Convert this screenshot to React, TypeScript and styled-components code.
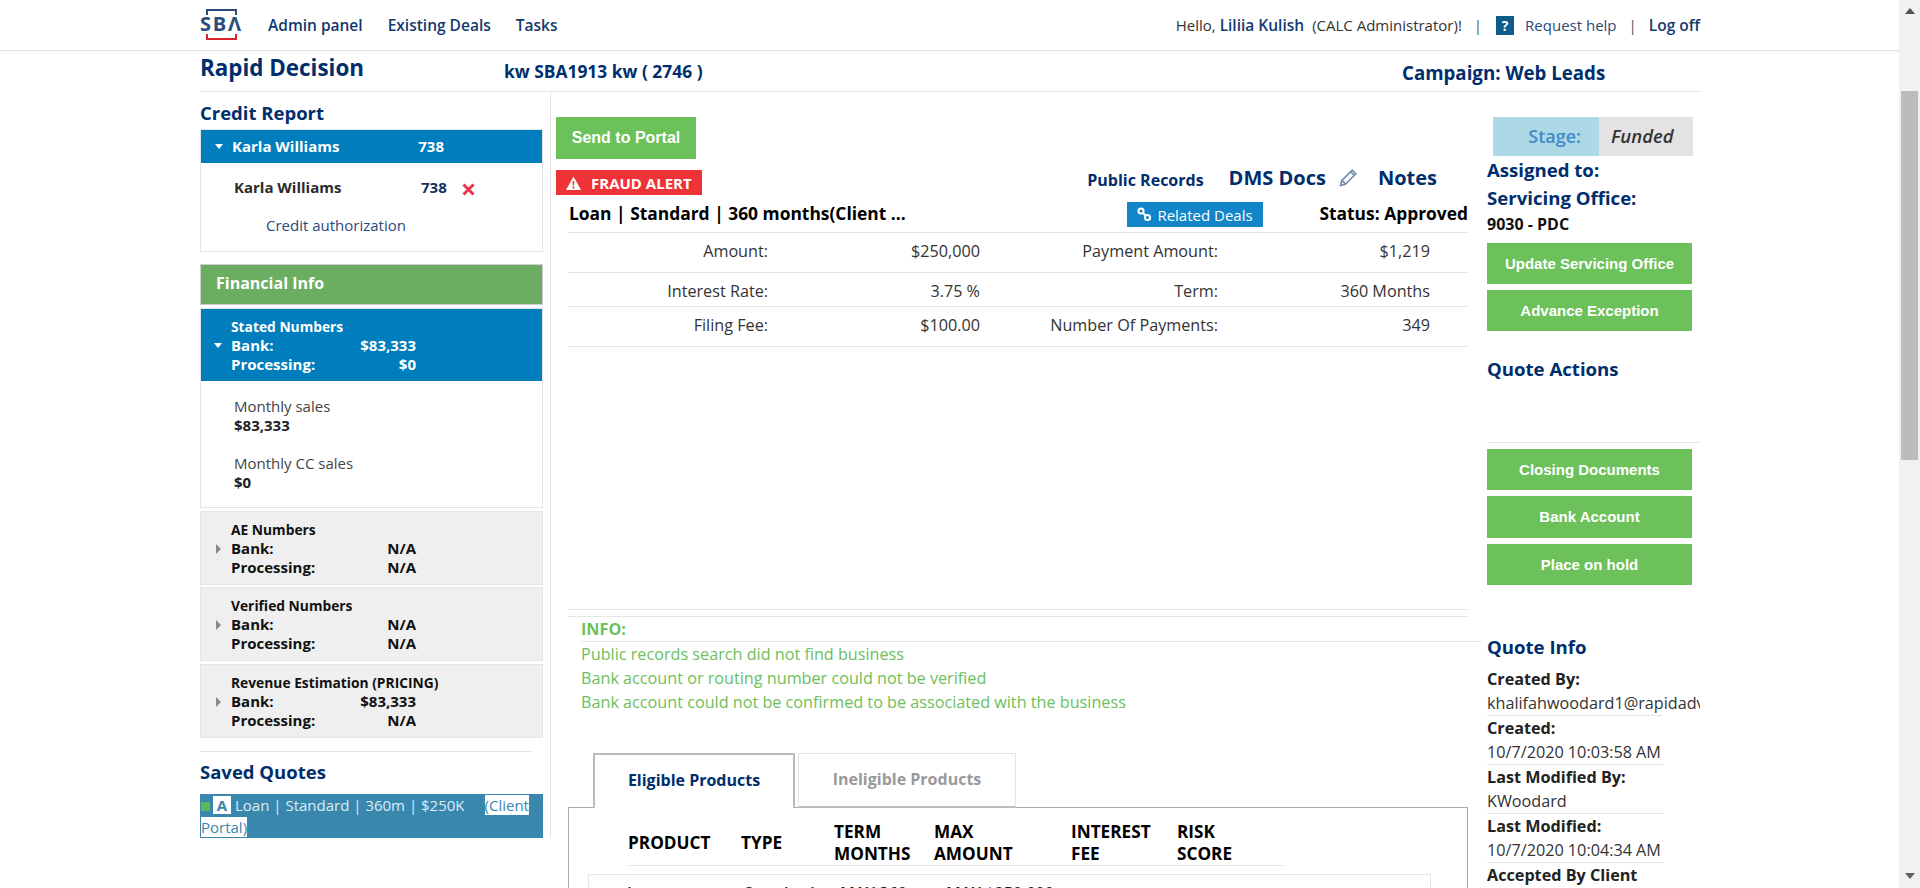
import React from "react";
import styled, { createGlobalStyle } from "styled-components";

const GlobalStyle = createGlobalStyle`
  html, body {
    margin: 0;
    height: 888px;
    overflow: hidden;
    background: #fff;
    font-family: "Open Sans", "Liberation Sans", sans-serif;
    font-size: 15px;
    color: #333;
  }
  * { box-sizing: border-box; }
`;

const NAVY = "#002e6d";
const GREEN = "#6cc15a";
const LINE = "#e5e5e5";

const Shell = styled.div`
  display: flex;
  height: 888px;
`;

const Page = styled.div`
  flex: 1;
  min-width: 0;
  overflow: hidden;
`;

const ScrollTrack = styled.div`
  width: 21px;
  height: 888px;
  background: #f1f1f1;
  display: flex;
  flex-direction: column;
  align-items: center;
`;

const ScrollUp = styled.div`
  margin-top: 8px;
  width: 0;
  height: 0;
  border-left: 5px solid transparent;
  border-right: 5px solid transparent;
  border-bottom: 6px solid #505050;
`;

const ScrollThumb = styled.div`
  margin-top: 77px;
  width: 17px;
  height: 369px;
  background: #bcbcbc;
`;

const ScrollDown = styled.div`
  margin-top: 413px;
  width: 0;
  height: 0;
  border-left: 5px solid transparent;
  border-right: 5px solid transparent;
  border-top: 6px solid #606060;
`;

const Header = styled.header`
  height: 51px;
  padding: 0 199px 0 200px;
  display: flex;
  align-items: center;
  border-bottom: 1px solid #e3e3e3;
  box-shadow: 0 1px 3px rgba(0, 0, 0, 0.04);
`;

const Logo = styled.svg`
  width: 42px;
  height: 34px;
  margin-right: 26px;
  flex: none;
`;

const Nav = styled.nav`
  display: flex;
  gap: 25px;
`;

const NavLink = styled.a`
  font-weight: 600;
  font-size: 15.5px;
  color: #123a6e;
`;

const UserArea = styled.div`
  margin-left: auto;
  display: flex;
  align-items: center;
  font-size: 15px;
  color: #333;
`;

const UserName = styled.b`
  font-weight: 600;
  font-size: 15.5px;
  color: #123a6e;
  margin: 0 8px 0 4px;
`;

const Pipe = styled.span`
  margin: 0 12px;
  color: #555;
`;

const HelpBox = styled.span`
  width: 18px;
  height: 19px;
  margin: 0 11px 0 2px;
  background: #0d5c8c;
  color: #fff;
  font-weight: 700;
  font-size: 14px;
  line-height: 19px;
  text-align: center;
`;

const HelpLink = styled.a`
  color: #2a4a7b;
`;

const LogOff = styled.a`
  font-weight: 600;
  font-size: 15.5px;
  color: #123a6e;
`;

const Wrap = styled.div`
  margin-left: 200px;
  width: 1500px;
`;

const TitleRow = styled.div`
  height: 41px;
  display: grid;
  grid-template-columns: 304px 898px 1fr;
  align-items: center;
  border-bottom: 1px solid ${LINE};
  color: ${NAVY};
`;

const PageTitle = styled.h1`
  margin: 0 0 6px;
  font-size: 22.4px;
  line-height: 32px;
  font-weight: 700;
`;

const DealName = styled.div`
  font-size: 17.4px;
  font-weight: 700;
  margin-bottom: 1px;
`;

const Campaign = styled.div`
  font-size: 18.7px;
  font-weight: 700;
  margin-top: 3px;
`;

const Columns = styled.div`
  display: flex;
  align-items: flex-start;
`;

const LeftCol = styled.aside`
  width: 351px;
  height: 746px;
  padding: 9px 7px 0 0;
  border-right: 1px solid ${LINE};
  flex: none;
`;

const SectionTitle = styled.h2`
  margin: 0;
  font-size: 18.5px;
  line-height: 28px;
  font-weight: 700;
  color: ${NAVY};
`;

const CreditHeading = styled(SectionTitle)`
  line-height: 24px;
  height: 28px;
`;

const Panel = styled.div<{ $mt?: number }>`
  border: 1px solid ${LINE};
  margin-top: ${(p) => p.$mt ?? 0}px;
`;

const CreditHead = styled.div`
  height: 33px;
  padding-bottom: 1px;
  background: #007dbc;
  color: #fff;
  font-weight: 700;
  font-size: 15px;
  display: grid;
  grid-template-columns: 31px 212px;
  align-items: center;
`;

const ValueRow = styled.div`
  display: flex;
  justify-content: space-between;
`;

const CaretDown = styled.span`
  justify-self: center;
  margin-left: 4px;
  width: 0;
  height: 0;
  border-left: 4.5px solid transparent;
  border-right: 4.5px solid transparent;
  border-top: 5px solid #fff;
`;

const CaretRight = styled.span`
  justify-self: center;
  margin-left: 4px;
  width: 0;
  height: 0;
  border-top: 5px solid transparent;
  border-bottom: 5px solid transparent;
  border-left: 5px solid #888;
`;

const CreditBody = styled.div`
  height: 88px;
  padding: 14px 0 0 33px;
`;

const BureauRow = styled.div`
  display: flex;
  align-items: center;
  font-weight: 700;
  line-height: 20px;
  color: #2b2b2b;
`;

const BureauName = styled.span`
  width: 187px;
`;

const BureauScore = styled.span`
  color: #14305c;
  width: 41px;
`;

const RemoveIcon = styled.svg`
  width: 13px;
  height: 13px;
  margin-top: 4px;
`;

const AuthLink = styled.a`
  display: block;
  margin: 18px 0 0 32px;
  line-height: 20px;
  color: #2a4a7b;
`;

const GreenBar = styled.div`
  margin-top: 12px;
  height: 41px;
  background: #6bae62;
  border: 1px solid #cfcfcf;
  padding-left: 15px;
  color: #fff;
  font-weight: 700;
  font-size: 16px;
  line-height: 37px;
`;

const AccordionHead = styled.div<{ $open?: boolean }>`
  background: ${(p) => (p.$open ? "#007dbc" : "#efefef")};
  color: ${(p) => (p.$open ? "#fff" : "#111")};
  padding: 8px 0 7px;
  display: grid;
  grid-template-columns: 30px 185px;
  grid-auto-rows: 19px;
  font-size: 15px;
  font-weight: 700;
  line-height: 19px;
  align-items: center;
`;

const HeadTitle = styled.div`
  grid-column: 2;
  font-size: 13.8px;
  white-space: nowrap;
`;

const HeadValues = styled(ValueRow)`
  grid-column: 2;
`;

const HeadSpacer = styled.span`
  grid-column: 1;
`;

const FieldList = styled.div`
  padding: 16px 0 15px 33px;
  line-height: 19px;
  font-size: 15px;
`;

const FieldLabel = styled.div`
  color: #444;
`;

const FieldValue = styled.div`
  font-weight: 700;
  color: #222;
  margin-bottom: 19px;
  &:last-child {
    margin-bottom: 0;
  }
`;

const ShortRule = styled.div`
  margin-top: 13px;
  width: 332px;
  border-top: 1px solid ${LINE};
`;

const SavedTitle = styled(SectionTitle)`
  margin-top: 6px;
`;

const QuoteRow = styled.div`
  margin-top: 8px;
  width: 343px;
  height: 44px;
  padding-left: 1px;
  background: #3a87ad;
  color: #d9edf7;
  line-height: 22px;
  font-size: 15px;
`;

const StatusDot = styled.span`
  display: inline-block;
  width: 9px;
  height: 9px;
  margin-right: 3px;
  background: #5cb85c;
`;

const GradeBadge = styled.span`
  display: inline-block;
  width: 18px;
  margin-right: 4px;
  line-height: 18px;
  text-align: center;
  background: #fff;
  color: #3a87ad;
  font-weight: 700;
`;

const PortalLink = styled.a`
  margin-left: 20px;
  background: #fff;
  color: #3a87ad;
`;

const CenterCol = styled.main`
  width: 930px;
  padding: 25px 0 0 5px;
  flex: none;
`;

const PortalButton = styled.button`
  display: block;
  width: 140px;
  height: 42px;
  border: 0;
  padding: 0;
  background: ${GREEN};
  color: #fff;
  font-family: "Liberation Sans", Arial, sans-serif;
  font-weight: 700;
  font-size: 16px;
`;

const AlertRow = styled.div`
  margin-top: 11px;
  width: 912px;
  height: 25px;
  display: flex;
  align-items: center;
`;

const FraudAlert = styled.div`
  width: 146px;
  height: 25px;
  padding-left: 10px;
  background: #ef3237;
  color: #fff;
  font-weight: 700;
  font-size: 15px;
  display: flex;
  align-items: center;
  gap: 10px;
`;

const DealLinks = styled.div`
  margin-left: auto;
  padding: 0 31px 11px 0;
  display: flex;
  align-items: center;
  color: ${NAVY};
  font-weight: 700;
`;

const PublicRecords = styled.a`
  font-size: 16px;
  margin: 5px 25px 0 0;
`;

const DocLink = styled.a`
  font-size: 20px;
`;

const PencilIcon = styled.svg`
  width: 19px;
  height: 19px;
  margin: 0 20px 0 13px;
`;

const DetailBlock = styled.div`
  margin: 7px 0 0 12px;
  width: 900px;
`;

const LoanHead = styled.div`
  height: 31px;
  display: grid;
  grid-template-columns: 559px 136px 1fr;
  align-items: start;
  border-bottom: 1px solid ${LINE};
`;

const LoanTitle = styled.div`
  padding-left: 1px;
  font-size: 17.4px;
  line-height: 22px;
  font-weight: 700;
  color: #000;
  white-space: nowrap;
`;

const RelatedButton = styled.a`
  height: 25px;
  background: #1185c8;
  color: #fff;
  font-size: 15px;
  display: flex;
  align-items: center;
  justify-content: center;
  gap: 5px;
`;

const LoanStatus = styled(LoanTitle)`
  text-align: right;
`;

const TermRow = styled.div<{ $h: number }>`
  height: ${(p) => p.$h}px;
  padding-top: 8px;
  display: grid;
  grid-template-columns: 200px 212px 238px 212px;
  font-size: 16.2px;
  line-height: 20px;
  text-align: right;
  color: #333;
  border-bottom: 1px solid ${LINE};
`;

const DoubleRule = styled.div`
  margin-top: 262px;
  height: 8px;
  border-top: 1px solid ${LINE};
  border-bottom: 1px solid ${LINE};
`;

const InfoBlock = styled.div`
  margin-left: 13px;
  width: 900px;
  color: #6cbf5c;
  line-height: 24px;
  font-size: 16.2px;
`;

const InfoTitle = styled.div`
  font-weight: 700;
  border-bottom: 1px solid ${LINE};
`;

const Tabs = styled.div`
  margin: 39px 0 0 25px;
  display: flex;
  gap: 3px;
  height: 55px;
`;

const Tab = styled.div<{ $active?: boolean; $w: number }>`
  position: relative;
  width: ${(p) => p.$w}px;
  height: 55px;
  font-weight: 700;
  font-size: 16px;
  line-height: 50px;
  text-align: center;
  color: ${(p) => (p.$active ? NAVY : "#999")};
  background: #fff;
  border: ${(p) => (p.$active ? "2px solid #bbb" : `1px solid ${LINE}`)};
  border-bottom: ${(p) => (p.$active ? "0" : "2px solid #bbb")};
`;

const ProductPanel = styled.section`
  margin-top: -1px;
  width: 900px;
  height: 200px;
  padding: 13px 0 0 59px;
  border: 1px solid #aaa;
  border-bottom: 0;
`;

const ProductHead = styled.div`
  width: 656px;
  height: 45px;
  display: grid;
  grid-template-columns: 113px 93px 100px 137px 106px 107px;
  align-items: center;
  font-size: 17.2px;
  line-height: 22px;
  font-weight: 700;
  color: #000;
  border-bottom: 1px solid ${LINE};
`;

const ProductRow = styled.div`
  margin: 8px 0 0 -40px;
  width: 843px;
  height: 60px;
  padding: 8px 0 0 38px;
  border: 1px solid ${LINE};
  display: grid;
  grid-template-columns: 117px 96px 106px 200px;
  font-size: 16px;
  font-weight: 600;
  line-height: 20px;
  color: #222;
`;

const RightCol = styled.aside`
  margin-left: 6px;
  width: 213px;
  padding-top: 25px;
  overflow: hidden;
  flex: none;
`;

const StageRow = styled.div`
  margin-left: 6px;
  display: flex;
  height: 39px;
  font-size: 18px;
  font-weight: 600;
  line-height: 38px;
`;

const StageLabel = styled.div`
  width: 106px;
  padding-right: 18px;
  text-align: right;
  background: #add8e6;
  color: #428bca;
`;

const StageValue = styled.div`
  width: 94px;
  padding-left: 12px;
  background: #e3e3e3;
  color: #333;
  font-size: 18.5px;
  font-style: italic;
`;

const SideHeading = styled.div<{ $mt?: number }>`
  margin-top: ${(p) => p.$mt ?? 0}px;
  font-size: 18.6px;
  font-weight: 700;
  line-height: 28px;
  color: ${NAVY};
`;

const OfficeCode = styled.div`
  font-size: 16px;
  font-weight: 700;
  line-height: 24px;
  color: #111;
`;

const ActionList = styled.div<{ $mt: number }>`
  margin-top: ${(p) => p.$mt}px;
  display: flex;
  flex-direction: column;
  gap: 6px;
`;

const ActionButton = styled.button<{ $tall?: boolean }>`
  width: 205px;
  height: ${(p) => (p.$tall ? 42 : 41)}px;
  border: 0;
  padding: 0 0 ${(p) => (p.$tall ? 1 : 0)}px;
  background: ${GREEN};
  color: #fff;
  font-family: "Liberation Sans", Arial, sans-serif;
  font-weight: 700;
  font-size: 15px;
`;

const SideRule = styled.div`
  margin-top: 59px;
  border-top: 1px solid ${LINE};
`;

const MetaList = styled.dl`
  margin: 6px 0 0;
  font-size: 16.2px;
  line-height: 24px;
`;

const MetaLabel = styled.dt`
  font-weight: 700;
  color: #222;
  white-space: nowrap;
`;

const MetaValue = styled.dd`
  margin: 0;
  height: 25px;
  width: 176px;
  color: #333;
  white-space: nowrap;
  border-bottom: 1px solid ${LINE};
`;

const Numbers = ({
  title,
  bank,
  processing,
  open,
}: {
  title: string;
  bank: string;
  processing: string;
  open?: boolean;
}) => (
  <AccordionHead $open={open}>
    <HeadTitle>{title}</HeadTitle>
    {open ? <CaretDown /> : <CaretRight />}
    <HeadValues>
      <span>Bank:</span>
      <span>{bank}</span>
    </HeadValues>
    <HeadSpacer />
    <HeadValues>
      <span>Processing:</span>
      <span>{processing}</span>
    </HeadValues>
  </AccordionHead>
);

const terms = [
  { h: 40, cells: ["Amount:", "$250,000", "Payment Amount:", "$1,219"] },
  { h: 34, cells: ["Interest Rate:", "3.75 %", "Term:", "360 Months"] },
  { h: 40, cells: ["Filing Fee:", "$100.00", "Number Of Payments:", "349"] },
];

const meta = [
  ["Created By:", "khalifahwoodard1@rapidadvance.com"],
  ["Created:", "10/7/2020 10:03:58 AM"],
  ["Last Modified By:", "KWoodard"],
  ["Last Modified:", "10/7/2020 10:04:34 AM"],
  ["Accepted By Client", "10/7/2020"],
];

export default function App() {
  return (
    <Shell>
      <GlobalStyle />
      <Page>
        <Header>
          <Logo viewBox="0 0 42 34">
            <path d="M7 7V2h29v5" fill="none" stroke="#2b4b7c" strokeWidth="2" />
            <path d="M7 26v5h29v-5" fill="none" stroke="#d8232a" strokeWidth="2" />
            <text x="0" y="23" fontFamily="Open Sans" fontWeight="700" fontSize="20" fill="#2b4b7c" textLength="41">
              SBΛ
            </text>
          </Logo>
          <Nav>
            <NavLink>Admin panel</NavLink>
            <NavLink>Existing Deals</NavLink>
            <NavLink>Tasks</NavLink>
          </Nav>
          <UserArea>
            Hello, <UserName>Liliia Kulish</UserName> (CALC Administrator)!
            <Pipe>|</Pipe>
            <HelpBox>?</HelpBox>
            <HelpLink>Request help</HelpLink>
            <Pipe>|</Pipe>
            <LogOff>Log off</LogOff>
          </UserArea>
        </Header>
        <Wrap>
          <TitleRow>
            <PageTitle>Rapid Decision</PageTitle>
            <DealName>kw SBA1913 kw ( 2746 )</DealName>
            <Campaign>Campaign: Web Leads</Campaign>
          </TitleRow>
          <Columns>
            <LeftCol>
              <CreditHeading>Credit Report</CreditHeading>
              <Panel>
                <CreditHead>
                  <CaretDown />
                  <ValueRow>
                    <span>Karla Williams</span>
                    <span>738</span>
                  </ValueRow>
                </CreditHead>
                <CreditBody>
                  <BureauRow>
                    <BureauName>Karla Williams</BureauName>
                    <BureauScore>738</BureauScore>
                    <RemoveIcon viewBox="0 0 13 13">
                      <path d="M1.5 1.5l10 10M11.5 1.5l-10 10" stroke="#e8384f" strokeWidth="3" />
                    </RemoveIcon>
                  </BureauRow>
                  <AuthLink>Credit authorization</AuthLink>
                </CreditBody>
              </Panel>
              <GreenBar>Financial Info</GreenBar>
              <Panel $mt={3}>
                <Numbers title="Stated Numbers" bank="$83,333" processing="$0" open />
                <FieldList>
                  <FieldLabel>Monthly sales</FieldLabel>
                  <FieldValue>$83,333</FieldValue>
                  <FieldLabel>Monthly CC sales</FieldLabel>
                  <FieldValue>$0</FieldValue>
                </FieldList>
              </Panel>
              <Panel $mt={3}>
                <Numbers title="AE Numbers" bank="N/A" processing="N/A" />
              </Panel>
              <Panel $mt={2}>
                <Numbers title="Verified Numbers" bank="N/A" processing="N/A" />
              </Panel>
              <Panel $mt={3}>
                <Numbers title="Revenue Estimation (PRICING)" bank="$83,333" processing="N/A" />
              </Panel>
              <ShortRule />
              <SavedTitle>Saved Quotes</SavedTitle>
              <QuoteRow>
                <StatusDot />
                <GradeBadge>A</GradeBadge>
                Loan | Standard | 360m | $250K
                <PortalLink>(Client Portal)</PortalLink>
              </QuoteRow>
            </LeftCol>

            <CenterCol>
              <PortalButton>Send to Portal</PortalButton>
              <AlertRow>
                <FraudAlert>
                  <svg width="15" height="14" viewBox="0 0 15 14">
                    <path d="M7.5 0.5L15 14H0z" fill="#fff" />
                    <path d="M6.6 5h1.8l-.3 4.6H6.9zM6.6 10.6h1.8v1.8H6.6z" fill="#ef3237" />
                  </svg>
                  FRAUD ALERT
                </FraudAlert>
                <DealLinks>
                  <PublicRecords>Public Records</PublicRecords>
                  <DocLink>DMS Docs</DocLink>
                  <PencilIcon viewBox="0 0 18 18">
                    <path
                      d="M1.5 16.5l1-4.5L12.5 2l3.5 3.5-10 10zM3 12l3 3M11 3.5l3.5 3.5"
                      fill="none"
                      stroke="#6f8ab0"
                      strokeWidth="1.5"
                    />
                  </PencilIcon>
                  <DocLink>Notes</DocLink>
                </DealLinks>
              </AlertRow>
              <DetailBlock>
                <LoanHead>
                  <LoanTitle>Loan | Standard | 360 months(Client ...</LoanTitle>
                  <RelatedButton>
                    <svg width="15" height="15" viewBox="0 0 15 15">
                      <g fill="none" stroke="#fff" strokeWidth="2">
                        <circle cx="4" cy="4" r="2.6" />
                        <circle cx="10.5" cy="10.5" r="2.6" />
                        <path d="M5.8 5.8l3 3" />
                      </g>
                    </svg>
                    Related Deals
                  </RelatedButton>
                  <LoanStatus>Status: Approved</LoanStatus>
                </LoanHead>
                {terms.map((row) => (
                  <TermRow key={row.cells[0]} $h={row.h}>
                    {row.cells.map((cell) => (
                      <span key={cell}>{cell}</span>
                    ))}
                  </TermRow>
                ))}
                <DoubleRule />
                <InfoBlock>
                  <InfoTitle>INFO:</InfoTitle>
                  <div>Public records search did not find business</div>
                  <div>Bank account or routing number could not be verified</div>
                  <div>Bank account could not be confirmed to be associated with the business</div>
                </InfoBlock>
                <Tabs>
                  <Tab $active $w={202}>
                    Eligible Products
                  </Tab>
                  <Tab $w={218}>Ineligible Products</Tab>
                </Tabs>
                <ProductPanel>
                  <ProductHead>
                    <span>PRODUCT</span>
                    <span>TYPE</span>
                    <span>
                      TERM
                      <br />
                      MONTHS
                    </span>
                    <span>
                      MAX
                      <br />
                      AMOUNT
                    </span>
                    <span>
                      INTEREST
                      <br />
                      FEE
                    </span>
                    <span>
                      RISK
                      <br />
                      SCORE
                    </span>
                  </ProductHead>
                  <ProductRow>
                    <span>Loan</span>
                    <span>Standard</span>
                    <span>MAX 360</span>
                    <span>MAX $250,000</span>
                  </ProductRow>
                </ProductPanel>
              </DetailBlock>
            </CenterCol>

            <RightCol>
              <StageRow>
                <StageLabel>Stage:</StageLabel>
                <StageValue>Funded</StageValue>
              </StageRow>
              <SideHeading>Assigned to:</SideHeading>
              <SideHeading>Servicing Office:</SideHeading>
              <OfficeCode>9030 - PDC</OfficeCode>
              <ActionList $mt={7}>
                <ActionButton>Update Servicing Office</ActionButton>
                <ActionButton>Advance Exception</ActionButton>
              </ActionList>
              <SideHeading $mt={24}>Quote Actions</SideHeading>
              <SideRule />
              <ActionList $mt={6}>
                <ActionButton>Closing Documents</ActionButton>
                <ActionButton $tall>Bank Account</ActionButton>
                <ActionButton>Place on hold</ActionButton>
              </ActionList>
              <SideHeading $mt={48}>Quote Info</SideHeading>
              <MetaList>
                {meta.map(([label, value]) => (
                  <div key={label}>
                    <MetaLabel>{label}</MetaLabel>
                    <MetaValue>{value}</MetaValue>
                  </div>
                ))}
              </MetaList>
            </RightCol>
          </Columns>
        </Wrap>
      </Page>
      <ScrollTrack>
        <ScrollUp />
        <ScrollThumb />
        <ScrollDown />
      </ScrollTrack>
    </Shell>
  );
}
